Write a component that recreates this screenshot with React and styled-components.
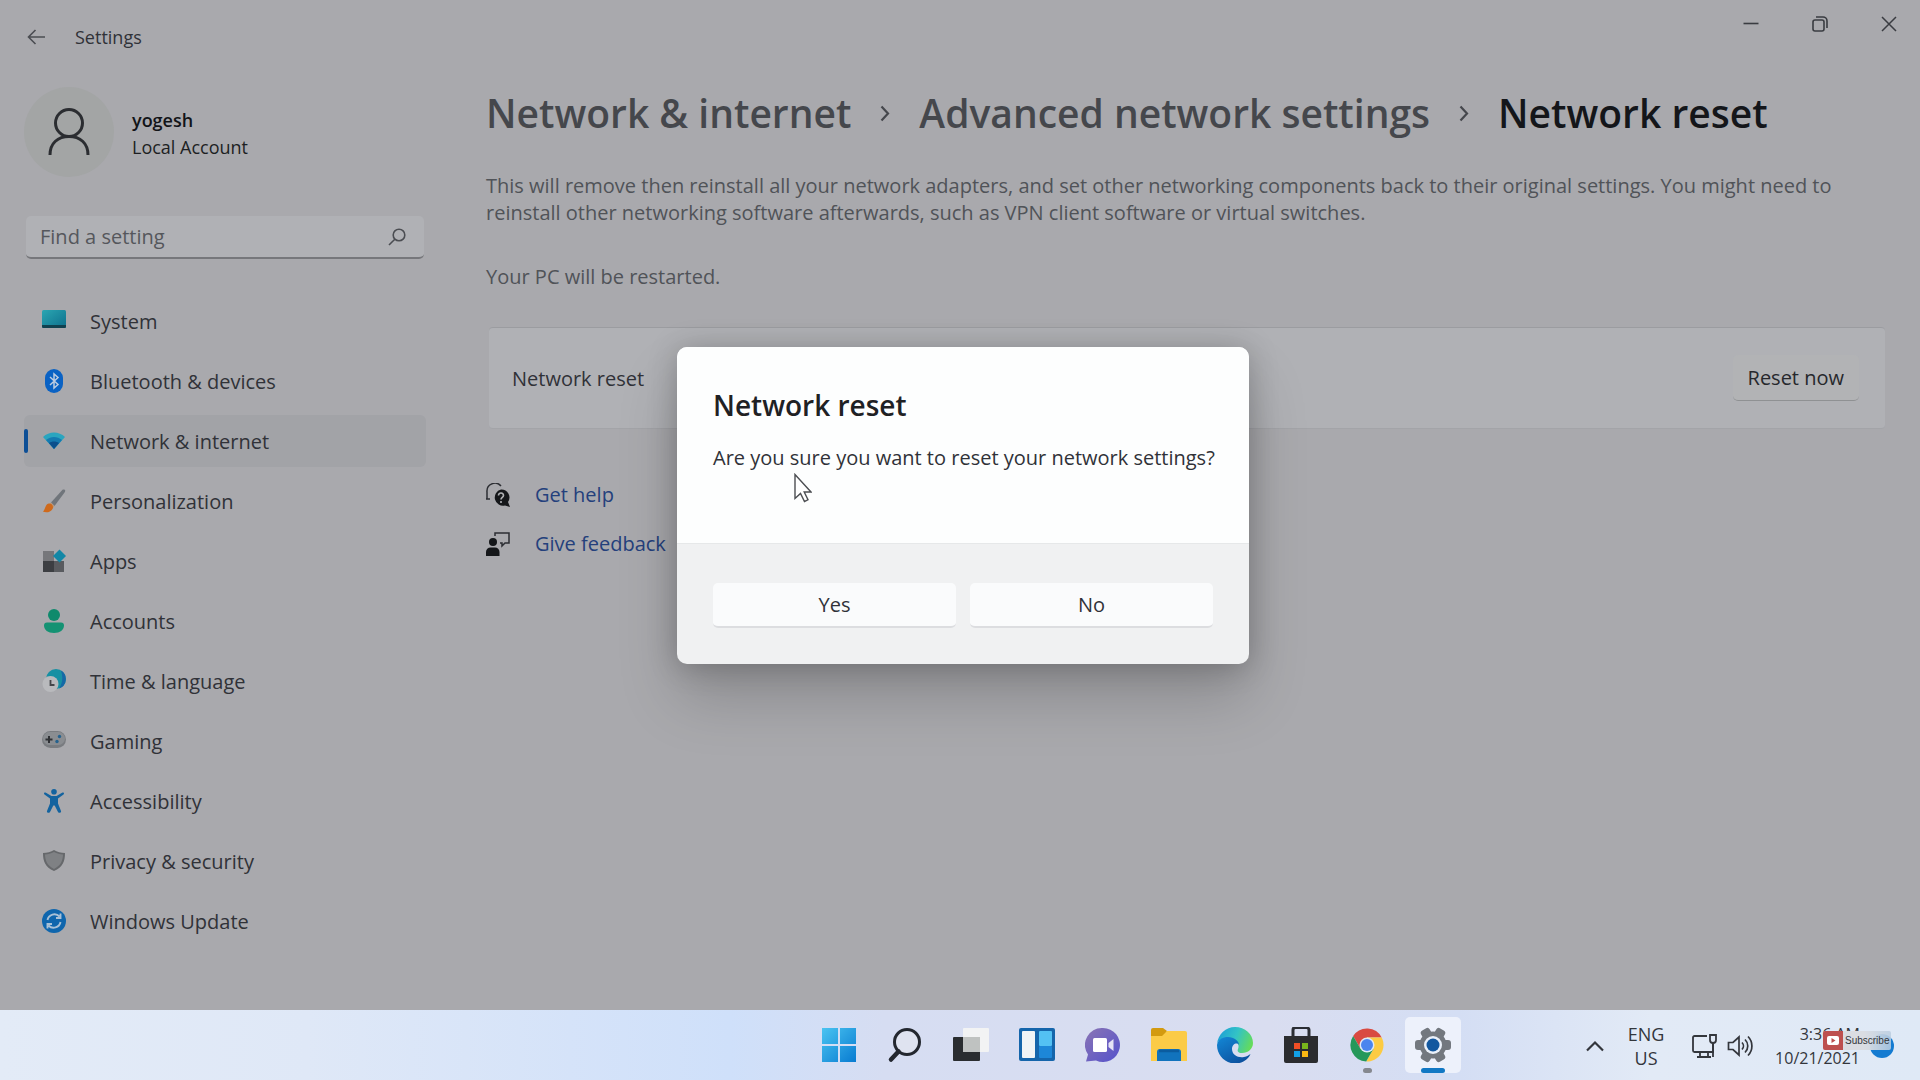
import styled, { createGlobalStyle } from "styled-components";

const GlobalStyle = createGlobalStyle`
  * {
    box-sizing: border-box;
  }

  body {
    margin: 0;
    font-family: "Open Sans", "Noto Sans", sans-serif;
    font-size: 20px;
    line-height: 27px;
    color: #303238;
    background: #a9a9ad;
  }

  h1, h2, p, ul, ol {
    margin: 0;
    padding: 0;
    font: inherit;
    list-style: none;
  }

  button, input {
    font: inherit;
    color: inherit;
    border: 0;
    padding: 0;
    margin: 0;
    background: none;
  }

  svg {
    display: block;
  }
`;

const Desktop = styled.div`
  display: grid;
  grid-template-rows: 1fr 70px;
  min-height: 100vh;
`;

const SettingsWindow = styled.div`
  position: relative;
  display: flex;
  flex-direction: column;
  background: #a9a9ad;
`;

const TitleBar = styled.header`
  display: flex;
  align-items: flex-start;
  justify-content: space-between;
  height: 72px;
  padding-left: 18px;
`;

const TitleGroup = styled.div`
  display: flex;
  align-items: center;
  gap: 21px;
  height: 74px;
  font-size: 18px;
`;

const IconButton = styled.button`
  display: grid;
  place-items: center;
  width: 36px;
  height: 36px;
`;

const WindowControls = styled.div`
  display: flex;
  gap: 7px;
`;

const WindowButton = styled.button`
  display: grid;
  place-items: center;
  width: 62px;
  height: 48px;
`;

const Columns = styled.div`
  display: grid;
  grid-template-columns: 426px 1fr;
  column-gap: 60px;
  flex: 1;
`;

const Sidebar = styled.aside`
  padding: 15px 0 0 24px;
`;

const Profile = styled.div`
  display: flex;
  align-items: center;
  gap: 18px;
  height: 90px;
`;

const Avatar = styled.div`
  display: grid;
  place-items: center;
  width: 90px;
  height: 90px;
  border-radius: 50%;
  background: #a3a5a5;
`;

const ProfileText = styled.div`
  padding-top: 3px;
  font-size: 18px;
  color: #1d1f23;
`;

const ProfileName = styled.div`
  font-weight: 600;
  color: #121418;
`;

const SearchBox = styled.label`
  display: flex;
  align-items: center;
  height: 43px;
  margin: 39px 2px 0;
  padding: 0 18px 0 14px;
  border-radius: 5px;
  border-bottom: 2px solid #76777b;
  background: #b0b1b5;
`;

const SearchInput = styled.input`
  flex: 1;
  min-width: 0;
  outline: none;

  &::placeholder {
    color: #55575c;
    opacity: 1;
  }
`;

const NavList = styled.ul`
  display: flex;
  flex-direction: column;
  gap: 8px;
  margin-top: 36px;
`;

const NavLink = styled.a`
  display: flex;
  align-items: center;
  gap: 24px;
  height: 52px;
  border-radius: 6px;
  color: inherit;
  text-decoration: none;
  background: ${({ $active }) => ($active ? "#a2a3a7" : "transparent")};

  &::before {
    content: "";
    width: 4px;
    height: 24px;
    margin-right: -10px;
    border-radius: 2px;
    background: ${({ $active }) => ($active ? "#0d4f96" : "transparent")};
  }
`;

const Content = styled.main`
  padding: 11px 35px 0 0;
`;

const Breadcrumb = styled.ol`
  display: flex;
  align-items: center;
  gap: 29px;
  height: 60px;
  font-size: 39px;
  font-weight: 600;
  line-height: 60px;
  white-space: nowrap;
`;

const Crumb = styled.li`
  display: flex;
  align-items: center;
  gap: 29px;
  color: #45474c;
`;

const CrumbLink = styled.a`
  color: inherit;
  text-decoration: none;
`;

const PageTitle = styled.h1`
  color: #14161a;
`;

const Description = styled.div`
  display: flex;
  flex-direction: column;
  gap: 37px;
  margin-top: 29px;
  color: #505358;
`;

const Card = styled.section`
  display: flex;
  align-items: center;
  justify-content: space-between;
  height: 102px;
  margin: 37px 0 0 3px;
  padding: 0 26px 0 23px;
  border-top: 1px solid #9b9ca0;
  border-bottom: 1px solid #a3a4a8;
  border-radius: 4px;
  background: #b0b1b5;
`;

const ResetButton = styled.button`
  height: 46px;
  padding: 0 15px;
  border-radius: 5px;
  border-bottom: 1px solid #8f9193;
  color: #26282c;
  background: #b2b3b5;
`;

const SupportLinks = styled.div`
  display: flex;
  flex-direction: column;
  gap: 22px;
  margin-top: 52px;
`;

const SupportLink = styled.a`
  display: flex;
  align-items: center;
  gap: 25px;
  color: #24407c;
  text-decoration: none;
`;

const DialogLayer = styled.div`
  position: absolute;
  inset: 0;
  display: grid;
  place-items: center;
  padding-left: 6px;
`;

const Dialog = styled.div`
  position: relative;
  width: 572px;
  border-radius: 10px;
  overflow: hidden;
  background: #f0f1f2;
  box-shadow: 0 34px 60px rgba(0, 0, 0, 0.18), 0 2px 30px rgba(0, 0, 0, 0.22);
`;

const DialogBody = styled.div`
  height: 196px;
  padding: 40px 36px 0;
  background: #fdfefe;
`;

const DialogTitle = styled.h2`
  font-size: 28px;
  font-weight: 600;
  line-height: 36px;
  color: #1f2124;
`;

const DialogText = styled.p`
  margin-top: 21px;
  white-space: nowrap;
`;

const DialogActions = styled.div`
  display: grid;
  grid-template-columns: 1fr 1fr;
  gap: 14px;
  padding: 39px 36px 36px;
  border-top: 1px solid #e6e8e9;
`;

const DialogButton = styled.button`
  height: 45px;
  border-radius: 5px;
  border-bottom: 2px solid #dcdde0;
  background: #fafbfc;
`;

const Cursor = styled.svg`
  position: absolute;
  left: 117px;
  top: 126px;
`;

const Taskbar = styled.footer`
  display: grid;
  grid-template-columns: 1fr auto 459px;
  align-items: center;
  background: linear-gradient(
    90deg,
    #e3ebf7 0%,
    #dfe8f7 16%,
    #cfe0fa 38%,
    #d6ddf2 46%,
    #d9ddf0 66%,
    #d4def4 76%,
    #e2eaf6 86%,
    #dfe9f6 100%
  );
`;

const TaskList = styled.div`
  display: flex;
  gap: 10px;
  grid-column: 2;
`;

const TaskButton = styled.button`
  display: grid;
  place-items: center;
  position: relative;
  width: 56px;
  height: 56px;
  border-radius: 5px;
  background: ${({ $active }) => ($active ? "#edf1fb" : "transparent")};

  &::after {
    content: "";
    display: ${({ $mark }) => ($mark ? "block" : "none")};
    position: absolute;
    bottom: 0;
    width: ${({ $mark }) => $mark}px;
    height: 5px;
    border-radius: 3px;
    background: ${({ $active }) => ($active ? "#1278c4" : "#85888f")};
  }
`;

const Tray = styled.div`
  display: flex;
  align-items: center;
  justify-content: flex-end;
  padding: 2px 26px 0 0;
  font-size: 16px;
  line-height: 24px;
  color: #33363c;
`;

const TrayButton = styled.button`
  display: flex;
  align-items: center;
  gap: 10px;
`;

const Language = styled.button`
  width: 54px;
  margin: 0 18px 0 15px;
  font-size: 18px;
  text-align: center;
`;

const Clock = styled.button`
  position: relative;
  display: flex;
  align-items: center;
  gap: 10px;
  margin-left: 22px;
  text-align: right;
`;

const Notice = styled.span`
  width: 24px;
  height: 24px;
  border-radius: 50%;
  background: #147bd1;
`;

const Subscribe = styled.span`
  position: absolute;
  right: 3px;
  top: 9px;
  display: flex;
  align-items: center;
  width: 68px;
  height: 19px;
  border-radius: 2px;
  overflow: hidden;
  font-family: "Liberation Sans", Arial, sans-serif;
  font-size: 10px;
  line-height: 19px;
  color: #33363a;
  background: linear-gradient(90deg, #dadde2 60%, rgba(186, 205, 224, 0.85));
`;

const SubscribeMark = styled.svg`
  margin-right: 2px;
  flex: none;
`;

const SystemIcon = () => (
  <svg width="24" height="24" viewBox="0 0 24 24">
    <defs>
      <linearGradient id="sys" x1="0" y1="0" x2="1" y2="1">
        <stop offset="0" stopColor="#2ba6b2" />
        <stop offset="1" stopColor="#0d6f8c" />
      </linearGradient>
    </defs>
    <rect y="1" width="24" height="18" rx="1.5" fill="url(#sys)" />
    <path d="M0 16h24v1.5a1.5 1.5 0 0 1-1.5 1.5h-21A1.5 1.5 0 0 1 0 17.500z" fill="#10414f" />
  </svg>
);

const BluetoothIcon = () => (
  <svg width="24" height="24" viewBox="0 0 24 24">
    <rect x="3" width="18" height="24" rx="9" fill="#0a62c4" />
    <path
      d="M8 8l8 7.500-4 3.500V5l4 3.500L8 16"
      fill="none"
      stroke="#bccbe0"
      strokeWidth="1.500"
    />
  </svg>
);

const WifiIcon = () => (
  <svg width="24" height="24" viewBox="0 0 24 24">
    <path d="M1 8C7 2 17 2 23 8L12 20z" fill="#2aa5bf" />
    <path d="M4 11c5-4 11-4 16 0l-8 9z" fill="#147ab0" />
    <path d="M7 14c3-2 7-2 10 0l-5 6z" fill="#0b4f8c" />
  </svg>
);

const BrushIcon = () => (
  <svg width="24" height="24" viewBox="0 0 24 24">
    <path d="M20.500.8c2-1.200 3.400.4 2.400 2.200L12.500 17 9 13.500z" fill="#70757b" />
    <path d="M9 13.500l3.500 3.500-1.500 2-4-4z" fill="#b9977a" />
    <path d="M7 14.500c3 0 5 3 3.500 5.500C8.500 23.500 4 24 .8 22.600 3.500 21 3 15 7 14.500z" fill="#cf6a1c" />
  </svg>
);

const AppsIcon = () => (
  <svg width="24" height="24" viewBox="0 0 24 24">
    <rect x="1" y="2" width="11" height="11" fill="#76777b" />
    <rect x="1" y="12" width="11" height="11" fill="#3c3e42" />
    <rect x="12" y="12" width="10" height="11" fill="#595b5f" />
    <path d="M17.500 0.500L24 7l-6.500 6.500L11 7z" fill="#1287a6" />
  </svg>
);

const AccountsIcon = () => (
  <svg width="24" height="24" viewBox="0 0 24 24">
    <circle cx="12" cy="6" r="6" fill="#0f8a6c" />
    <path d="M5 13.500h14a3 3 0 0 1 3 3c0 4.500-4 7.500-10 7.500S2 21 2 16.500a3 3 0 0 1 3-3z" fill="#149273" />
  </svg>
);

const TimeIcon = () => (
  <svg width="24" height="24" viewBox="0 0 24 24">
    <circle cx="14" cy="10" r="10" fill="#1790a3" />
    <path d="M19 1.500a10 10 0 0 1-2 18c4-6 4-12 2-18z" fill="#1668a6" />
    <circle cx="8.500" cy="15" r="8" fill="#b9babd" />
    <path d="M8.500 11v5h4" fill="none" stroke="#44464a" strokeWidth="1.800" />
  </svg>
);

const GamingIcon = () => (
  <svg width="24" height="24" viewBox="0 0 24 24">
    <rect y="2" width="24" height="17" rx="8.500" fill="#797c80" />
    <rect x="1" y="3" width="22" height="13" rx="6.500" fill="#8a8d91" />
    <path d="M7 7v7M3.500 10.500h7" stroke="#2f3135" strokeWidth="2" />
    <circle cx="17.500" cy="7.500" r="1.700" fill="#25628e" />
    <circle cx="15" cy="12.500" r="1.700" fill="#25628e" />
  </svg>
);

const AccessibilityIcon = () => (
  <svg width="24" height="24" viewBox="0 0 24 24">
    <circle cx="12" cy="2.800" r="2.800" fill="#13639f" />
    <path
      d="M3.500 3.500L9.500 7h5l6-3.500c1.500-.4 2 1.200 1 2L16 9.500v5l3 7.500c.5 1.800-2 2.600-3 1l-3.300-6.500h-1.400L8 23c-1 1.600-3.500.8-3-1l3-7.500v-5L2.500 5.500c-1-.8-.5-2.400 1-2z"
      fill="#13639f"
    />
  </svg>
);

const ShieldIcon = () => (
  <svg width="24" height="24" viewBox="0 0 24 24">
    <path d="M12 1c3 2 7 3 11 3 0 8-2 14-11 18C3 18 1 12 1 4c4 0 8-1 11-3z" fill="#66686b" />
    <path d="M12 3c3 1.500 6 2.300 9 2.500-.2 6-2 11-9 14.500C5 16.500 3.200 11.500 3 5.500 6 5.300 9 4.500 12 3z" fill="#7f8184" />
  </svg>
);

const UpdateIcon = () => (
  <svg width="24" height="24" viewBox="0 0 24 24">
    <circle cx="12" cy="12" r="12" fill="#0f66ad" />
    <path
      d="M5.500 11a7 7 0 0 1 12-3.500M18.500 13a7 7 0 0 1-12 3.500M18.500 4.500v4.500H14M5.500 19.500V15H10"
      fill="none"
      stroke="#a9c1d6"
      strokeWidth="1.900"
    />
  </svg>
);

const HelpIcon = () => (
  <svg width="24" height="24" viewBox="0 0 24 24">
    <path d="M1 16V9a8 8 0 0 1 14-6M0 16h4" fill="none" stroke="#2c2e33" strokeWidth="1.500" />
    <path d="M15 6.500a8 8 0 0 1 7 12.500l2 5-5-1.500A8 8 0 1 1 15 6.500z" fill="#15171a" />
    <path
      d="M12.500 12.500c0-3.500 5-3 5 0 0 1.800-2.500 2-2.500 4M15 18v2"
      fill="none"
      stroke="#b0b1b4"
      strokeWidth="1.600"
    />
  </svg>
);

const FeedbackIcon = () => (
  <svg width="24" height="24" viewBox="0 0 24 24">
    <path d="M9 4V1h14v10h-4l-3 3v-3h-2" fill="none" stroke="#2c2e33" strokeWidth="1.500" />
    <circle cx="7" cy="10" r="4" fill="#15171a" />
    <path d="M0 24v-4a4.500 4.500 0 0 1 4.500-4.500h4.500a4.500 4.500 0 0 1 4.500 4.500v4z" fill="#15171a" />
  </svg>
);

const Chevron = () => (
  <svg width="10" height="17" viewBox="0 0 10 17">
    <path d="M1.500 1.500l6.500 7-6.500 7" fill="none" stroke="#45474c" strokeWidth="2.200" />
  </svg>
);

const StartIcon = () => (
  <svg width="36" height="36" viewBox="0 0 36 36">
    <defs>
      <linearGradient id="start" x1="0" y1="0" x2="36" y2="36" gradientUnits="userSpaceOnUse">
        <stop offset="0" stopColor="#4cc6f2" />
        <stop offset="1" stopColor="#0679d0" />
      </linearGradient>
    </defs>
    <path d="M1 1h16v16H1zM19 1h16v16H19zM1 19h16v16H1zM19 19h16v16H19z" fill="url(#start)" />
  </svg>
);

const SearchIcon = () => (
  <svg width="36" height="36" viewBox="0 0 36 36">
    <circle cx="20" cy="15" r="12.500" fill="#dfe3f0" stroke="#23272f" strokeWidth="3" />
    <path d="M11.500 24.500L4 32.500" stroke="#23272f" strokeWidth="4.500" strokeLinecap="round" />
  </svg>
);

const TaskViewIcon = () => (
  <svg width="36" height="36" viewBox="0 0 36 36">
    <rect x="0" y="10" width="27" height="24" rx="1" fill="#2a2d30" />
    <rect x="10" y="1" width="26" height="24" rx="1" fill="#f2f3f4" />
    <rect x="10" y="10" width="17" height="15" fill="#bfc2c1" />
  </svg>
);

const WidgetsIcon = () => (
  <svg width="36" height="36" viewBox="0 0 36 36">
    <rect y="1" width="36" height="33" rx="2" fill="#1565ab" />
    <rect x="3" y="4" width="13" height="27" rx="1" fill="#f0f4f6" />
    <rect x="20" y="4" width="13" height="15" rx="1" fill="#53c1f3" />
    <rect x="20" y="19" width="13" height="12" rx="1" fill="#1d87d8" />
  </svg>
);

const ChatIcon = () => (
  <svg width="36" height="36" viewBox="0 0 36 36">
    <defs>
      <linearGradient id="chat" x1="0" y1="0" x2="1" y2="1">
        <stop offset="0" stopColor="#8a74b4" />
        <stop offset="1" stopColor="#5552cc" />
      </linearGradient>
    </defs>
    <path d="M18 1a17 17 0 1 1-7 32.500L1 34.500l2-7A17 17 0 0 1 18 1z" fill="url(#chat)" />
    <rect x="8" y="11" width="14" height="14" rx="1.500" fill="#fff" />
    <path d="M23.500 16l5-4v12l-5-4z" fill="#e6e3f5" />
  </svg>
);

const FolderIcon = () => (
  <svg width="36" height="36" viewBox="0 0 36 36">
    <path d="M0 3a2 2 0 0 1 2-2h10l4 3-3 6H0z" fill="#d39a10" />
    <path d="M0 9h11l5-5h18a2 2 0 0 1 2 2v28H0z" fill="#fbcb47" />
    <path d="M6 34V25a3 3 0 0 1 3-3h18a3 3 0 0 1 3 3v9z" fill="#1173bd" />
    <path d="M8 24h20" stroke="#0b5c9f" strokeWidth="2.500" />
  </svg>
);

const EdgeIcon = () => (
  <svg width="36" height="36" viewBox="0 0 36 36">
    <defs>
      <linearGradient id="edgeTop" x1="0" y1="0.300" x2="1" y2="0.600">
        <stop offset="0" stopColor="#1c9fd6" />
        <stop offset="0.500" stopColor="#33c3c6" />
        <stop offset="1" stopColor="#66dc58" />
      </linearGradient>
      <linearGradient id="edgeBody" x1="0" y1="0" x2="0.700" y2="1">
        <stop offset="0" stopColor="#1388d6" />
        <stop offset="1" stopColor="#0c509e" />
      </linearGradient>
    </defs>
    <path
      d="M0 17C1 7 9 0 18 0c10 0 18 7 18 16 0 6-5 10-11 10-4 0-5-2-4-4 1.500-3 0-7-4-9C10 9 2 11 0 17z"
      fill="url(#edgeTop)"
    />
    <path
      d="M0 18C1 12 6 10 11 10c6 0 11 4 11 8-2-3-7-1-7 4 0 6 6 9 12 8 3-.5 5-2 6.500-3C31 33 25 36.500 18 36.500 8 36.500 0 28 0 18z"
      fill="url(#edgeBody)"
    />
  </svg>
);

const StoreIcon = () => (
  <svg width="36" height="36" viewBox="0 0 36 36">
    <path d="M10 11V3a2.500 2.500 0 0 1 2.500-2.500h11A2.500 2.500 0 0 1 26 3v8" fill="none" stroke="#2a2d33" strokeWidth="3" />
    <path d="M1 9h34v25a2 2 0 0 1-2 2H3a2 2 0 0 1-2-2z" fill="#2b2c2f" />
    <rect x="11" y="16" width="6" height="6" fill="#f04e25" />
    <rect x="19" y="16" width="6" height="6" fill="#78b61c" />
    <rect x="11" y="24" width="6" height="6" fill="#12a0e6" />
    <rect x="19" y="24" width="6" height="6" fill="#fbb813" />
  </svg>
);

const ChromeIcon = () => (
  <svg width="36" height="36" viewBox="0 0 48 48">
    <path d="M5.540 12.030A22 22 0 0 1 43.600 14H24v10l-8.660 5z" fill="#d94a41" />
    <path d="M43.600 14a22 22 0 0 1-20.730 31.970L32.660 29 24 24V14z" fill="#fccb43" />
    <path d="M22.870 45.970A22 22 0 0 1 5.540 12.030L15.340 29 24 24l8.660 5z" fill="#25985a" />
    <circle cx="24" cy="24" r="10" fill="#dfe8f6" />
    <circle cx="24" cy="24" r="8" fill="#4a85ee" />
  </svg>
);

const GearIcon = () => (
  <svg width="36" height="36" viewBox="0 0 36 36">
    {[0, 60, 120].map((angle) => (
      <rect
        key={angle}
        x="0"
        y="13"
        width="36"
        height="10"
        rx="3"
        fill="#73787f"
        transform={`rotate(${angle} 18 18)`}
      />
    ))}
    <circle cx="18" cy="18" r="13.500" fill="#73787f" />
    <circle cx="18" cy="18" r="9" fill="#eaf0fa" />
    <circle cx="18" cy="18" r="6.500" fill="#12579f" />
  </svg>
);

const navItems = [
  { label: "System", icon: <SystemIcon /> },
  { label: "Bluetooth & devices", icon: <BluetoothIcon /> },
  { label: "Network & internet", icon: <WifiIcon />, active: true },
  { label: "Personalization", icon: <BrushIcon /> },
  { label: "Apps", icon: <AppsIcon /> },
  { label: "Accounts", icon: <AccountsIcon /> },
  { label: "Time & language", icon: <TimeIcon /> },
  { label: "Gaming", icon: <GamingIcon /> },
  { label: "Accessibility", icon: <AccessibilityIcon /> },
  { label: "Privacy & security", icon: <ShieldIcon /> },
  { label: "Windows Update", icon: <UpdateIcon /> },
];

const taskItems = [
  { label: "Start", icon: <StartIcon /> },
  { label: "Search", icon: <SearchIcon /> },
  { label: "Task View", icon: <TaskViewIcon /> },
  { label: "Widgets", icon: <WidgetsIcon /> },
  { label: "Chat", icon: <ChatIcon /> },
  { label: "File Explorer", icon: <FolderIcon /> },
  { label: "Microsoft Edge", icon: <EdgeIcon /> },
  { label: "Microsoft Store", icon: <StoreIcon /> },
  { label: "Google Chrome", icon: <ChromeIcon />, mark: 9 },
  { label: "Settings", icon: <GearIcon />, mark: 24, active: true },
];

const WindowTitle = () => (
  <TitleBar>
    <TitleGroup>
      <IconButton aria-label="Back">
        <svg width="18" height="16" viewBox="0 0 18 16">
          <path d="M18 8H1.500M8.500 1L1.500 8l7 7" fill="none" stroke="#4b4d52" strokeWidth="1.600" />
        </svg>
      </IconButton>
      <span>Settings</span>
    </TitleGroup>
    <WindowControls>
      <WindowButton aria-label="Minimize">
        <svg width="16" height="16" viewBox="0 0 16 16">
          <path d="M0.500 7.500h15" stroke="#3a3c41" strokeWidth="1.600" />
        </svg>
      </WindowButton>
      <WindowButton aria-label="Restore">
        <svg width="16" height="16" viewBox="0 0 16 16" fill="none" stroke="#3a3c41" strokeWidth="1.600">
          <rect x="1" y="4" width="11" height="11" rx="2" />
          <path d="M4 1h7a4 4 0 0 1 4 4v7" />
        </svg>
      </WindowButton>
      <WindowButton aria-label="Close">
        <svg width="16" height="16" viewBox="0 0 16 16">
          <path d="M1 1l14 14M15 1L1 15" stroke="#3a3c41" strokeWidth="1.500" />
        </svg>
      </WindowButton>
    </WindowControls>
  </TitleBar>
);

const SideNav = () => (
  <Sidebar>
    <Profile>
      <Avatar>
        <svg width="42" height="48" viewBox="0 0 42 48" fill="none" stroke="#2b2d31" strokeWidth="3">
          <circle cx="21" cy="15" r="13.500" />
          <path d="M2 47C2 35 10 28.500 21 28.500S40 35 40 47" />
        </svg>
      </Avatar>
      <ProfileText>
        <ProfileName>yogesh</ProfileName>
        Local Account
      </ProfileText>
    </Profile>
    <SearchBox>
      <SearchInput type="search" placeholder="Find a setting" aria-label="Find a setting" />
      <svg width="18" height="18" viewBox="0 0 18 18" fill="none" stroke="#4b4d52" strokeWidth="1.600">
        <circle cx="11" cy="7" r="5.800" />
        <path d="M6.800 11.200L1 17" />
      </svg>
    </SearchBox>
    <nav>
      <NavList>
        {navItems.map(({ label, icon, active }) => (
          <li key={label}>
            <NavLink href="#" $active={active} aria-current={active ? "page" : undefined}>
              {icon}
              {label}
            </NavLink>
          </li>
        ))}
      </NavList>
    </nav>
  </Sidebar>
);

const NetworkResetPage = () => (
  <Content>
    <Breadcrumb>
      {["Network & internet", "Advanced network settings"].map((label) => (
        <Crumb key={label}>
          <CrumbLink href="#">{label}</CrumbLink>
          <Chevron />
        </Crumb>
      ))}
      <li>
        <PageTitle>Network reset</PageTitle>
      </li>
    </Breadcrumb>
    <Description>
      <p>
        This will remove then reinstall all your network adapters, and set other networking
        components back to their original settings. You might need to reinstall other networking
        software afterwards, such as VPN client software or virtual switches.
      </p>
      <p>Your PC will be restarted.</p>
    </Description>
    <Card>
      <span>Network reset</span>
      <ResetButton>Reset now</ResetButton>
    </Card>
    <SupportLinks>
      <SupportLink href="#">
        <HelpIcon />
        Get help
      </SupportLink>
      <SupportLink href="#">
        <FeedbackIcon />
        Give feedback
      </SupportLink>
    </SupportLinks>
  </Content>
);

const ConfirmDialog = () => (
  <DialogLayer>
    <Dialog role="dialog" aria-labelledby="dialog-title">
      <DialogBody>
        <DialogTitle id="dialog-title">Network reset</DialogTitle>
        <DialogText>Are you sure you want to reset your network settings?</DialogText>
      </DialogBody>
      <DialogActions>
        <DialogButton>Yes</DialogButton>
        <DialogButton>No</DialogButton>
      </DialogActions>
      <Cursor width="18" height="30" viewBox="0 0 18 30">
        <path
          d="M1 1.500v24l5.500-5 4 8 3.500-1.700-3.800-7.800H17z"
          fill="#fff"
          stroke="#4c4e52"
          strokeWidth="1.400"
        />
      </Cursor>
    </Dialog>
  </DialogLayer>
);

const SystemTray = () => (
  <Tray>
    <TrayButton aria-label="Show hidden icons">
      <svg width="18" height="12" viewBox="0 0 18 12">
        <path d="M1 10.500l8-8 8 8" fill="none" stroke="#33363c" strokeWidth="2.200" />
      </svg>
    </TrayButton>
    <Language>
      ENG
      <br />
      US
    </Language>
    <TrayButton aria-label="Network and volume">
      <svg width="26" height="26" viewBox="0 0 26 26" fill="none" stroke="#33363c" strokeWidth="1.800">
        <path d="M16 3H3.500A1.500 1.500 0 0 0 2 4.500v13A1.500 1.500 0 0 0 3.500 19H22v-9M6 24h14M9 19v5M17 19v5" />
        <path d="M19 2h6v5a3 3 0 0 1-6 0zM22 10v14" />
      </svg>
      <svg width="26" height="22" viewBox="0 0 26 22" fill="none" stroke="#33363c" strokeWidth="1.700">
        <path d="M1.500 7.500v7H6l6 5.500V2L6 7.500z" />
        <path d="M15 7.500a5 5 0 0 1 0 7M18 4.500a9 9 0 0 1 0 13M21 1.500a13.500 13.500 0 0 1 0 19" />
      </svg>
    </TrayButton>
    <Clock>
      <span>
        3:36 AM
        <br />
        10/21/2021
      </span>
      <Notice />
      <Subscribe>
        <SubscribeMark width="20" height="19" viewBox="0 0 20 19">
          <rect width="20" height="19" fill="#bd504f" />
          <rect x="4" y="5" width="12" height="9" rx="2" fill="#fff" />
          <path d="M8.500 7l4 2.500-4 2.500z" fill="#bd504f" />
        </SubscribeMark>
        Subscribe
      </Subscribe>
    </Clock>
  </Tray>
);

const App = () => {
  return (
    <>
      <GlobalStyle />
      <Desktop>
        <SettingsWindow>
          <WindowTitle />
          <Columns>
            <SideNav />
            <NetworkResetPage />
          </Columns>
          <ConfirmDialog />
        </SettingsWindow>
        <Taskbar>
          <TaskList>
            {taskItems.map(({ label, icon, mark, active }) => (
              <TaskButton key={label} aria-label={label} $mark={mark} $active={active}>
                {icon}
              </TaskButton>
            ))}
          </TaskList>
          <SystemTray />
        </Taskbar>
      </Desktop>
    </>
  );
};

export default App;
